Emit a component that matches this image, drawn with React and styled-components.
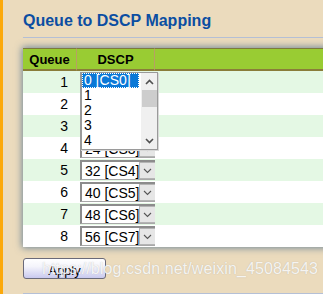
import React from 'react'
import styled, { createGlobalStyle } from 'styled-components'

// * ---------- Global ---------- *
const GlobalStyle = createGlobalStyle`
    html, body {
        margin: 0;
        padding: 0;
        background: #ebdbbd;
        font-family: "Liberation Sans", Arial, sans-serif;
        overflow: hidden;
    }
`

const Page = styled.div`
    display: flex;
    width: 323px;
    height: 294px;
    position: relative;
    overflow: hidden;
`

const SideBar = styled.div`
    width: 3px;
    flex-shrink: 0;
    background: #fca90a;
`

const Content = styled.div`
    flex: 1;
    padding: 10px 0 0 20px;
    display: flex;
    flex-direction: column;
`

const Title = styled.h1`
    margin: 0;
    font-size: 16px;
    font-weight: bold;
    color: #0b4ea2;
    line-height: 22px;
    height: 27px;
    border-bottom: 1px solid #b5c0d6;
`

const TableWrap = styled.div`
    margin-top: 10px;
    width: 330px;
    position: relative;
    box-shadow: 0 0 7px 1px rgba(70, 105, 140, 0.75);
    background: #fff;
`

const Table = styled.div`
    display: grid;
    grid-template-columns: 54px 78px 1fr;
`

const HeadCell = styled.div`
    background: #99cc33;
    border-top: 1px solid #7d7a3e;
    border-bottom: 2px solid #8a7d3a;
    border-right: ${p => p.last ? 'none' : '1px solid #b8a063'};
    box-sizing: border-box;
    height: 23px;
    font-size: 13px;
    font-weight: bold;
    color: #000;
    display: flex;
    align-items: center;
    justify-content: center;
    padding-top: 1px;
`

const Cell = styled.div`
    height: 22px;
    background: ${p => p.odd ? '#e4f8e4' : '#ffffff'};
    display: flex;
    align-items: center;
    justify-content: ${p => p.right ? 'flex-end' : 'flex-start'};
    padding-right: ${p => p.right ? '9px' : '0'};
    padding-left: ${p => p.right ? '0' : '3px'};
    font-size: 14px;
    color: #000;
    position: relative;
`

const SelectBox = styled.div`
    width: 78px;
    height: 20px;
    box-sizing: border-box;
    border: 1px solid #a8a8a8;
    border-top: 2px solid #8c8c8c;
    border-left: 2px solid #8c8c8c;
    background: #fff;
    display: flex;
    align-items: center;
    font-size: 14px;
`

const SelectText = styled.span`
    flex: 1;
    padding-left: 3px;
    white-space: nowrap;
    overflow: hidden;
`

const SelectButton = styled.span`
    width: 15px;
    height: 15px;
    margin-right: 1px;
    background: #e6e6e6;
    border: 1px solid #b4b4b4;
    display: flex;
    align-items: center;
    justify-content: center;
`

const ListBox = styled.div`
    position: absolute;
    left: 3px;
    top: 1px;
    width: 78px;
    height: 78px;
    box-sizing: border-box;
    border: 1px solid #9a9a9a;
    border-left: 2px solid #9a9a9a;
    background: #fff;
    display: flex;
    z-index: 5;
    box-shadow: 1px 1px 0 #d8d8d8;
`

const ListItems = styled.div`
    flex: 1;
    display: flex;
    flex-direction: column;
    padding-top: 0;
`

const ListItem = styled.div`
    height: 15px;
    line-height: 15px;
    font-size: 14px;
    padding-left: 2px;
    margin-right: 2px;
    background: ${p => p.active ? '#0a78d7' : 'transparent'};
    color: ${p => p.active ? '#fff' : '#000'};
    outline: ${p => p.active ? '1px dotted #ffffff' : 'none'};
    outline-offset: -1px;
`

const ScrollBar = styled.div`
    width: 16px;
    background: #f0f0f0;
    display: flex;
    flex-direction: column;
    align-items: center;
`

const ScrollArrow = styled.div`
    height: 17px;
    display: flex;
    align-items: center;
    justify-content: center;
`

const ScrollThumb = styled.div`
    width: 15px;
    height: 17px;
    background: #cdcdcd;
`

const ScrollSpace = styled.div`
    flex: 1;
`

const ApplyButton = styled.button`
    margin-top: 11px;
    width: 83px;
    height: 21px;
    border: 1px solid #6a6a7a;
    border-radius: 3px;
    background: linear-gradient(#ffffff 0%, #f4f4fb 40%, #c9c9ef 100%);
    font-family: "Liberation Sans", Arial, sans-serif;
    font-size: 13px;
    color: #000;
    padding: 3px 0 0;
    text-align: center;
`

const BottomLine = styled.div`
    margin-top: 14px;
    height: 1px;
    background: #b5c0d6;
`

const Watermark = styled.div`
    position: absolute;
    left: 42px;
    top: 260px;
    font-size: 16px;
    letter-spacing: 0.1px;
    color: rgba(255, 255, 255, 0.85);
    font-family: "Liberation Sans", Arial, sans-serif;
    white-space: nowrap;
    pointer-events: none;
    text-shadow: 0 0 1px rgba(140, 140, 140, 0.5);
`

const ChevronDown = ({ color = '#555', w = 1.1 }) => (
    <svg width="9" height="6" viewBox="0 0 9 6">
        <path d="M1 1 L4.5 4.5 L8 1" fill="none" stroke={color} strokeWidth={w} />
    </svg>
)

const ChevronUp = () => (
    <svg width="9" height="6" viewBox="0 0 9 6">
        <path d="M1 5 L4.5 1.5 L8 5" fill="none" stroke="#505050" strokeWidth="1.6" />
    </svg>
)

const rows = [
    { queue: 1, dscp: '0 [CS0]' },
    { queue: 2, dscp: '8 [CS1]' },
    { queue: 3, dscp: '16 [CS2]' },
    { queue: 4, dscp: '24 [CS3]' },
    { queue: 5, dscp: '32 [CS4]' },
    { queue: 6, dscp: '40 [CS5]' },
    { queue: 7, dscp: '48 [CS6]' },
    { queue: 8, dscp: '56 [CS7]' },
]

function App() {
    return (
        <Page>
            <GlobalStyle />
            <SideBar />
            <Content>
                <Title>Queue to DSCP Mapping</Title>
                <TableWrap>
                    <Table>
                        <HeadCell>Queue</HeadCell>
                        <HeadCell>DSCP</HeadCell>
                        <HeadCell last />
                        {rows.map((row, index) => (
                            <React.Fragment key={row.queue}>
                                <Cell odd={index % 2 === 0} right>{row.queue}</Cell>
                                <Cell odd={index % 2 === 0}>
                                    <SelectBox>
                                        <SelectText>{row.dscp}</SelectText>
                                        <SelectButton><ChevronDown /></SelectButton>
                                    </SelectBox>
                                    {index === 0 && (
                                        <ListBox>
                                            <ListItems>
                                                <ListItem active>0 [CS0]</ListItem>
                                                <ListItem>1</ListItem>
                                                <ListItem>2</ListItem>
                                                <ListItem>3</ListItem>
                                                <ListItem>4</ListItem>
                                            </ListItems>
                                            <ScrollBar>
                                                <ScrollArrow><ChevronUp /></ScrollArrow>
                                                <ScrollThumb />
                                                <ScrollSpace />
                                                <ScrollArrow><ChevronDown color="#505050" w={1.6} /></ScrollArrow>
                                            </ScrollBar>
                                        </ListBox>
                                    )}
                                </Cell>
                                <Cell odd={index % 2 === 0} />
                            </React.Fragment>
                        ))}
                    </Table>
                </TableWrap>
                <ApplyButton>Apply</ApplyButton>
                <BottomLine />
            </Content>
            <Watermark>https://blog.csdn.net/weixin_45084543</Watermark>
        </Page>
    )
}

export default App
